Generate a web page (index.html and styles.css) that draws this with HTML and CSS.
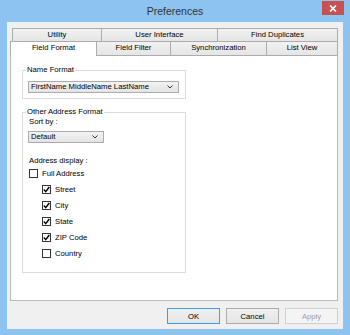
FILE: index.html
```html
<!DOCTYPE html>
<html lang="en">

<head>
    <meta charset="UTF-8">
    <title>Preferences</title>
    <link rel="stylesheet" href="styles.css">
</head>

<body>
    <div class="titlebar">
        <span></span>
        <span class="title">Preferences</span>
        <span class="close">
            <svg width="8" height="7" viewBox="0 0 8 7">
                <path d="M1 0.5 L7 6.5 M7 0.5 L1 6.5" stroke="#fff" stroke-width="1.7" fill="none" />
            </svg>
        </span>
    </div>

    <div class="client">
        <div class="tab-row back">
            <div class="tab t-utility">Utility</div>
            <div class="tab t-ui">User Interface</div>
            <div class="tab t-dup">Find Duplicates</div>
        </div>
        <div class="tab-row front">
            <div class="tab selected t-format">Field Format</div>
            <div class="tab t-filter">Field Filter</div>
            <div class="tab t-sync">Synchronization</div>
            <div class="tab t-list">List View</div>
        </div>

        <div class="panel">
            <div class="group name-group">
                <span class="group-title">Name Format</span>
                <div class="combo combo-name">
                    <span>FirstName MiddleName LastName</span>
                    <svg width="6" height="4" viewBox="0 0 6 4">
                        <path d="M0.5 0.5 L3 3 L5.5 0.5" stroke="#333" stroke-width="1" fill="none" />
                    </svg>
                </div>
            </div>

            <div class="group address-group">
                <span class="group-title">Other Address Format</span>
                <div class="label">Sort by :</div>
                <div class="combo combo-sort">
                    <span>Default</span>
                    <svg width="6" height="4" viewBox="0 0 6 4">
                        <path d="M0.5 0.5 L3 3 L5.5 0.5" stroke="#333" stroke-width="1" fill="none" />
                    </svg>
                </div>
                <div class="label display-label">Address display :</div>

                <div class="checks">
                    <div class="check"><span class="box"></span>Full Address</div>
                    <div class="check sub"><span class="box"><svg width="7" height="7" viewBox="0 0 7 7"><path d="M0.8 3.6 L2.7 5.6 L6.3 1" stroke="#000" stroke-width="1.5" fill="none" /></svg></span>Street</div>
                    <div class="check sub"><span class="box"><svg width="7" height="7" viewBox="0 0 7 7"><path d="M0.8 3.6 L2.7 5.6 L6.3 1" stroke="#000" stroke-width="1.5" fill="none" /></svg></span>City</div>
                    <div class="check sub"><span class="box"><svg width="7" height="7" viewBox="0 0 7 7"><path d="M0.8 3.6 L2.7 5.6 L6.3 1" stroke="#000" stroke-width="1.5" fill="none" /></svg></span>State</div>
                    <div class="check sub"><span class="box"><svg width="7" height="7" viewBox="0 0 7 7"><path d="M0.8 3.6 L2.7 5.6 L6.3 1" stroke="#000" stroke-width="1.5" fill="none" /></svg></span>ZIP Code</div>
                    <div class="check sub"><span class="box"></span>Country</div>
                </div>
            </div>
        </div>

        <div class="buttons">
            <button class="btn default">OK</button>
            <button class="btn">Cancel</button>
            <button class="btn" disabled>Apply</button>
        </div>
    </div>
</body>

</html>
```

FILE: styles.css
```css
* {
    padding: 0;
    margin: 0;
    box-sizing: border-box;
}

body {
    width: 350px;
    height: 335px;
    overflow: hidden;
    background-color: #8cc3f1;
    font-family: "Liberation Sans", Arial, sans-serif;
    font-size: 7.7px;
    color: #000;
}

.titlebar {
    height: 22px;
    display: grid;
    grid-template-columns: 1fr auto 1fr;
    align-items: start;
}

.title {
    font-size: 10.5px;
    line-height: 22px;
    color: #333;
}

.close {
    justify-self: end;
    margin: 1px 6px 0 0;
    width: 22px;
    height: 14px;
    background-color: #c75050;
    display: flex;
    align-items: center;
    justify-content: center;
}

.client {
    margin: 0 7px;
    height: 307px;
    background-color: #f0f0f0;
    padding-top: 6px;
}

/* tabs */
.tab-row {
    display: flex;
}

.tab-row.back {
    margin-left: 5px;
    height: 14px;
}

.tab-row.front {
    margin-left: 3px;
    margin-top: -1px;
    height: 15px;
}

.tab {
    border: 1px solid #acacac;
    background: linear-gradient(#f2f2f2, #e5e5e5);
    text-align: center;
    line-height: 12px;
    margin-right: -1px;
}

.tab.selected {
    background: #fff;
    border-bottom: none;
    position: relative;
    z-index: 1;
}

.t-utility { width: 90px; }
.t-ui { width: 117px; }
.t-dup { width: 121px; }
.t-format { width: 87px; }
.t-filter { width: 75px; }
.t-sync { width: 97px; }
.t-list { width: 72px; }

.panel {
    margin: -1px 0 0 3px;
    width: 328px;
    height: 246px;
    background-color: #fff;
    border: 1px solid #b9b9b9;
    padding: 14px 0 0 11px;
}

/* group boxes */
.group {
    position: relative;
    width: 164px;
    border: 1px solid #dcdcdc;
}

.group-title {
    position: absolute;
    top: -6px;
    left: 3px;
    padding: 0 1px;
    line-height: 10px;
    background-color: #fff;
}

.name-group {
    height: 29px;
    padding: 10px 0 0 5px;
}

.address-group {
    height: 161px;
    margin-top: 13px;
    padding: 4px 0 0 6px;
}

.combo {
    height: 12px;
    border: 1px solid #acacac;
    background: linear-gradient(#f2f2f2, #e4e4e4);
    display: flex;
    align-items: center;
    justify-content: space-between;
    padding: 0 5px 0 2px;
    line-height: 10px;
}

.combo-name {
    width: 151px;
}

.combo-sort {
    width: 76px;
    margin: 4px 0 0 -1px;
}

.label {
    line-height: 10px;
}

.display-label {
    margin-top: 13px;
}

.checks {
    display: flex;
    flex-direction: column;
    gap: 6px;
    margin-top: 2px;
}

.check {
    display: flex;
    align-items: center;
    gap: 4px;
    height: 10px;
}

.check.sub {
    margin-left: 13px;
}

.box {
    width: 9px;
    height: 9px;
    border: 1px solid #333;
    background-color: #fff;
    display: flex;
    align-items: center;
    justify-content: center;
}

/* buttons */
.buttons {
    display: flex;
    justify-content: flex-end;
    gap: 6px;
    margin-top: 7px;
    padding-right: 5px;
}

.btn {
    width: 53px;
    height: 16px;
    border: 1px solid #acacac;
    background: linear-gradient(#f0f0f0, #e5e5e5);
    font-family: "Liberation Sans", Arial, sans-serif;
    font-size: 7.7px;
    color: #000;
}

.btn.default {
    border-color: #3c9cf0;
}

.btn:disabled {
    background: #f4f4f4;
    border-color: #cfcfcf;
    color: #a0a0a0;
}
```
